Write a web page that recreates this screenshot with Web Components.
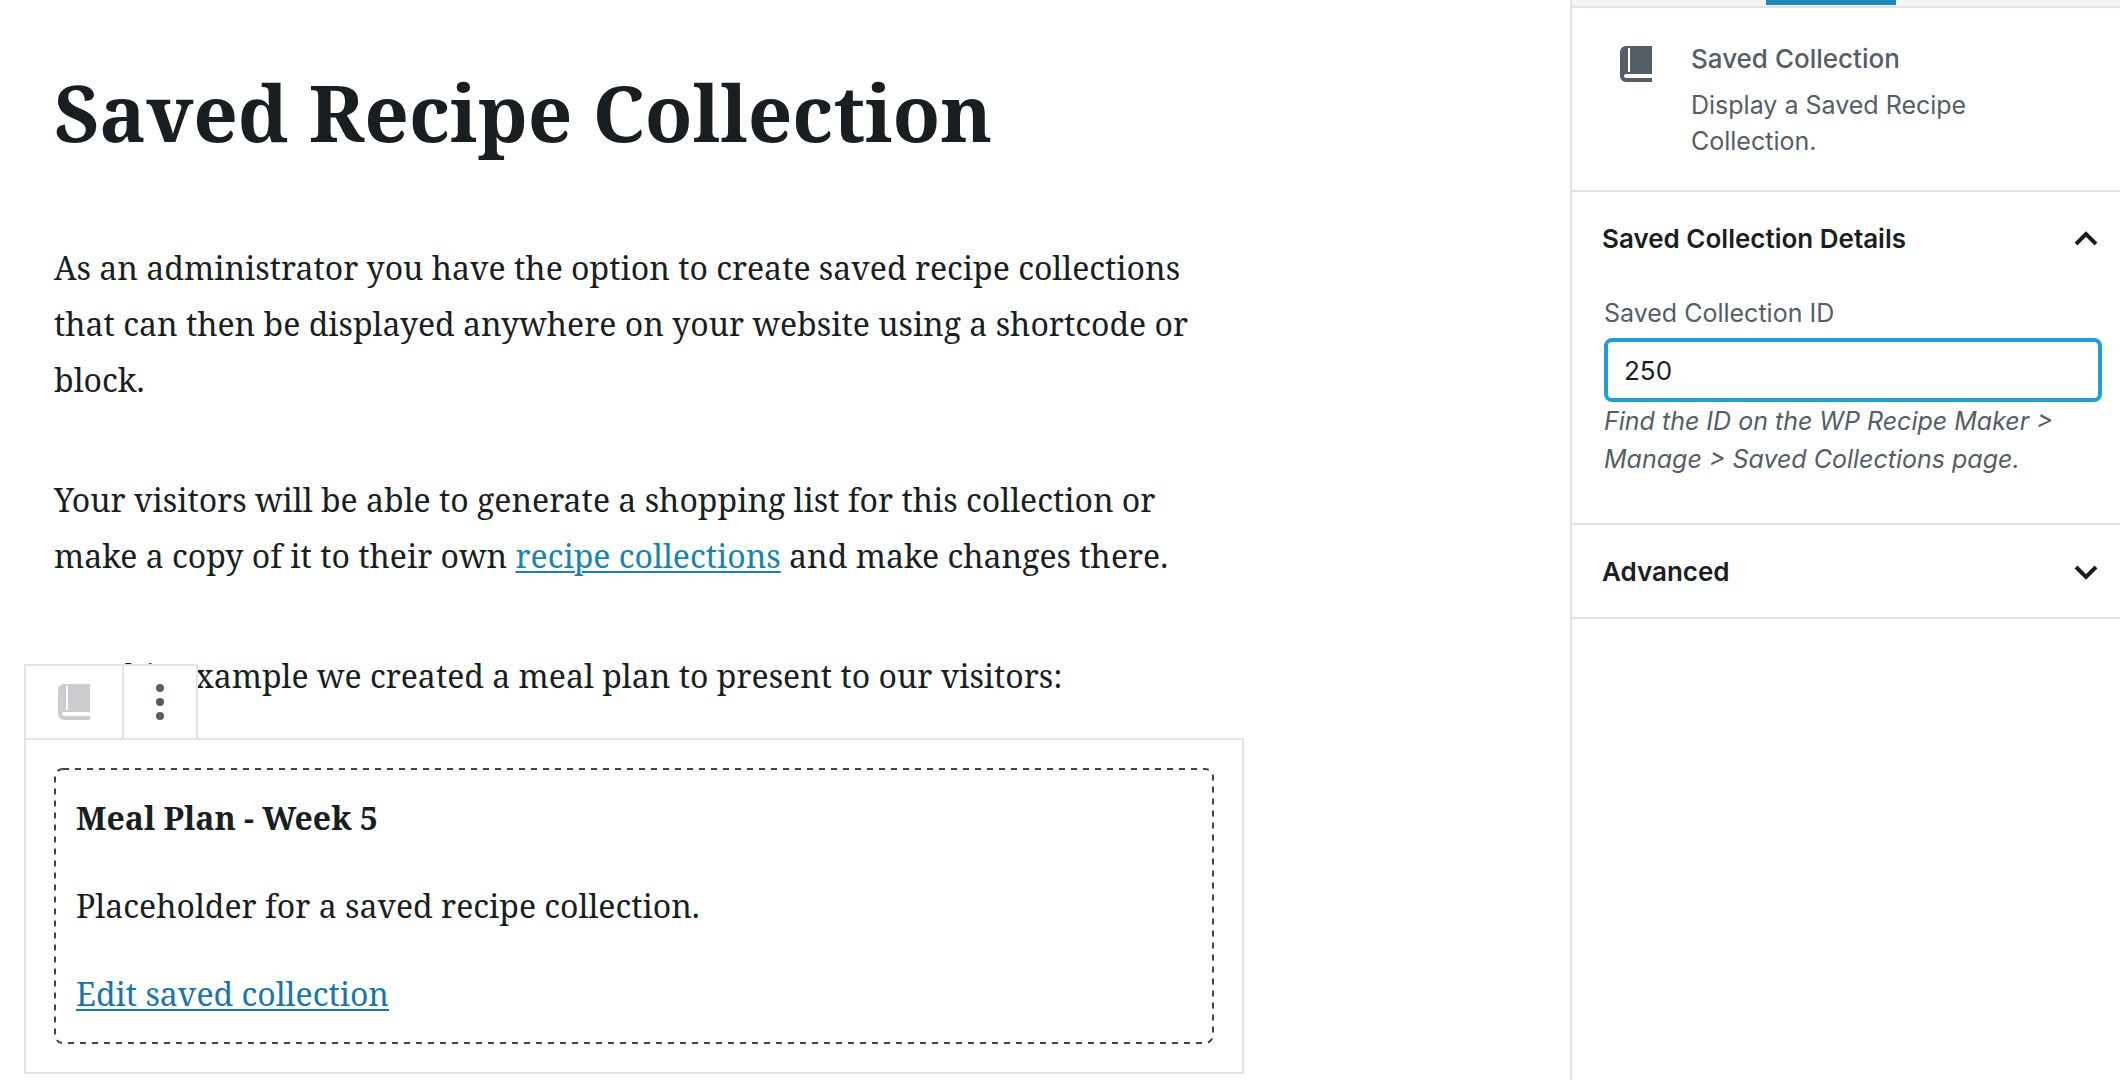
<!DOCTYPE html>
<html lang="en">
<head>
<meta charset="utf-8">
<title>Saved Recipe Collection</title>
<style>
  html, body { margin: 0; }
  body {
    --line: #e2e3e8;
    --ink: #191e23;
    --muted: #555d66;
    --link: #1b83ab;
    --action: #1b75a8;
    --sans: Inter, "Liberation Sans", sans-serif;
    --serif: "Noto Serif", "DejaVu Serif Condensed", "DejaVu Serif", serif;
    background: #fff;
    color: var(--ink);
    font-family: var(--serif);
  }
  a { color: var(--link); text-decoration-thickness: 2px; text-underline-offset: 3px; }
  a[slot="action"] { color: var(--action); }
</style>
</head>
<body>
<editor-layout>
  <post-editor>
    <span slot="title">Saved Recipe Collection</span>
    <text-block>As an administrator you have the option to create saved recipe collections that can then be displayed anywhere on your website using a shortcode or block.</text-block>
    <text-block>Your visitors will be able to generate a shopping list for this collection or make a copy of it to their own <a href="#collections">recipe collections</a> and make changes there.</text-block>
    <text-block>For this example we created a meal plan to present to our visitors:</text-block>
    <collection-block>
      <span slot="name">Meal Plan - Week 5</span>
      <span slot="description">Placeholder for a saved recipe collection.</span>
      <a slot="action" href="#edit">Edit saved collection</a>
    </collection-block>
  </post-editor>
  <block-inspector slot="sidebar">
    <block-card>
      <span slot="name">Saved Collection</span>
      <span slot="description">Display a Saved Recipe Collection.</span>
    </block-card>
    <panel-section heading="Saved Collection Details" open>
      <id-field label="Saved Collection ID" value="250">Find the ID on the WP Recipe Maker &gt; Manage &gt; Saved Collections page.</id-field>
    </panel-section>
    <panel-section heading="Advanced"></panel-section>
  </block-inspector>
</editor-layout>
<script>
  class Base extends HTMLElement {
    connectedCallback() {
      if (this.shadowRoot) return;
      this.attachShadow({ mode: "open" }).innerHTML = this.render();
    }
  }
  const define = (name, render) =>
    customElements.define(name, class extends Base { render() { return render(this); } });

  define("editor-layout", () => `
    <style>
      :host { display: grid; grid-template-columns: minmax(0, 1fr) 550px; height: 100vh; overflow: hidden; }
      main { min-width: 0; }
    </style>
    <main><slot></slot></main>
    <slot name="sidebar"></slot>`);

  define("post-editor", () => `
    <style>
      :host { display: block; max-width: 1220px; padding: 62px 24px 0; }
      h1 { margin: 0 0 78px; padding: 0 30px; font-size: 78px; line-height: 100px; font-weight: 700; }
    </style>
    <h1><slot name="title"></slot></h1>
    <slot></slot>`);

  define("text-block", () => `
    <style>
      :host { display: block; padding: 0 30px; margin-bottom: 64px; }
      p { margin: 0; font-size: 32px; line-height: 56px; }
    </style>
    <p><slot></slot></p>`);

  define("book-icon", () => `
    <style>
      :host { display: block; width: 40px; height: 40px; }
      svg { display: block; }
    </style>
    <svg width="40" height="40" viewBox="0 0 20 20" fill="currentColor" fill-rule="evenodd" aria-hidden="true">
      <path d="M5 1h13v14H5a1 1 0 0 0 0 2h13v2H5a3 3 0 0 1-3-3V4a3 3 0 0 1 3-3zM6 2v12h1V2z"/>
    </svg>`);

  define("collection-block", () => `
    <style>
      :host { display: block; position: relative; margin-top: -30px; border: 2px solid var(--line); padding: 28px; }
      .toolbar { position: absolute; left: -2px; bottom: calc(100% + 2px); display: flex; border: 2px solid var(--line); border-bottom: 0; background: #fff; }
      button { display: flex; align-items: center; justify-content: center; height: 72px; padding: 0; border: 0; background: #fff; color: var(--muted); }
      .type { width: 96px; }
      .type book-icon { opacity: .3; }
      .more { width: 74px; border-left: 2px solid var(--line); }
      .box { position: relative; padding: 22px; font-size: 32px; line-height: 56px; }
      .outline { position: absolute; inset: 0; width: 100%; height: 100%; pointer-events: none; }
      .outline rect { x: 1px; y: 1px; width: calc(100% - 2px); height: calc(100% - 2px); rx: 8px; fill: none; stroke: #444; stroke-width: 2px; stroke-dasharray: 6 6; }
      p { margin: 0 0 32px; }
      p:last-child { margin: 0; }
      .name { font-weight: 700; }
    </style>
    <div class="toolbar" role="toolbar" aria-label="Block tools">
      <button class="type" type="button" aria-label="Block type"><book-icon></book-icon></button>
      <button class="more" type="button" aria-label="More options">
        <svg width="40" height="40" viewBox="0 0 40 40" fill="currentColor" aria-hidden="true">
          <circle cx="20" cy="6" r="4"/><circle cx="20" cy="20" r="4"/><circle cx="20" cy="34" r="4"/>
        </svg>
      </button>
    </div>
    <div class="box">
      <svg class="outline" aria-hidden="true"><rect/></svg>
      <p class="name"><slot name="name"></slot></p>
      <p><slot name="description"></slot></p>
      <p><slot name="action"></slot></p>
    </div>`);

  define("block-inspector", () => `
    <style>
      :host { display: block; border-left: 2px solid var(--line); font-family: var(--sans); font-size: 25px; line-height: 36px; color: var(--muted); }
      .tabs { height: 6px; background: #f3f4f5; border-bottom: 2px solid var(--line); }
      .tabs div { width: 130px; height: 5px; margin-left: 194px; background: #1c86b8; }
    </style>
    <div class="tabs"><div></div></div>
    <slot></slot>`);

  define("block-card", () => `
    <style>
      :host { display: flex; gap: 35px; padding: 33px 44px 31px; border-bottom: 2px solid var(--line); }
      book-icon { flex: none; margin-top: 3px; }
      h2 { margin: 0 0 10px; font-size: 26px; font-weight: 500; }
      p { margin: 0; }
    </style>
    <book-icon></book-icon>
    <div>
      <h2><slot name="name"></slot></h2>
      <p><slot name="description"></slot></p>
    </div>`);

  define("panel-section", el => `
    <style>
      :host { display: block; border-bottom: 2px solid var(--line); }
      h2 { margin: 0; }
      button { display: flex; align-items: center; justify-content: space-between; width: 100%; height: 92px; padding: 2px 20px 0 30px; border: 0; background: none; font: 600 26px/36px var(--sans); color: var(--ink); }
      .body { padding: 11px 18px 45px 32px; }
    </style>
    <h2><button type="button" aria-expanded="${el.hasAttribute("open")}">${el.getAttribute("heading")}
      <svg width="28" height="20" viewBox="0 0 28 20" fill="none" stroke="currentColor" stroke-width="4" aria-hidden="true">
        <path d="${el.hasAttribute("open") ? "M4 15 14 5l10 10" : "M4 5l10 10L24 5"}"/>
      </svg></button></h2>
    ${el.hasAttribute("open") ? `<div class="body"><slot></slot></div>` : ""}`);

  define("id-field", el => `
    <style>
      :host { display: block; }
      label { display: block; margin-bottom: 7px; }
      input { display: block; box-sizing: border-box; width: 100%; height: 64px; padding: 0 16px; border: 4px solid #209fd0; border-radius: 8px; outline: 0; background: #fff; font: 400 26px/36px var(--sans); color: var(--ink); }
      p { margin: 0; line-height: 38px; font-style: italic; }
    </style>
    <label for="field">${el.getAttribute("label")}</label>
    <input id="field" type="text" value="${el.getAttribute("value")}" aria-describedby="help">
    <p id="help"><slot></slot></p>`);
</script>
</body>
</html>
